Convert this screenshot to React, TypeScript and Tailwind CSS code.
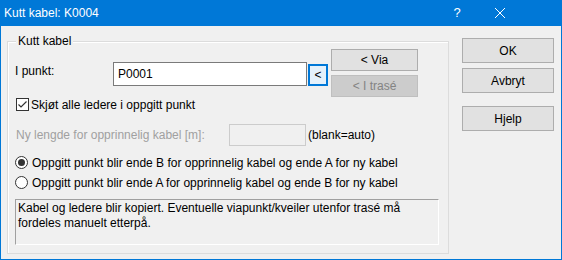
import React from 'react';

const FONT = "font-['Liberation_Sans',Arial,sans-serif]";

function WinButton({ label, disabled, className = '' }: { label: string; disabled?: boolean; className?: string }) {
  return (
    <div
      className={`flex items-center justify-center border text-[12px] leading-none ${
        disabled ? 'bg-[#cccccc] border-[#bfbfbf] text-[#838383]' : 'bg-[#e1e1e1] border-[#adadad] text-black'
      } ${className}`}
    >
      {label}
    </div>
  );
}

function Checkbox() {
  return (
    <div className="w-[13px] h-[13px] border border-[#333333] bg-white flex items-center justify-center">
      <svg width="11" height="11" viewBox="0 0 11 11">
        <path d="M1.5 5.5 L4 8 L9.5 2.5" fill="none" stroke="#333333" strokeWidth="1.2" />
      </svg>
    </div>
  );
}

function Radio({ checked }: { checked?: boolean }) {
  return (
    <div className="w-[13px] h-[13px] rounded-full border border-[#333333] bg-white flex items-center justify-center">
      {checked && <div className="w-[7px] h-[7px] rounded-full bg-[#333333]" />}
    </div>
  );
}

export default function App() {
  return (
    <div className={`w-[562px] h-[260px] bg-[#0078d7] flex flex-col ${FONT}`}>
      {/* Title bar */}
      <div className="h-[26px] flex items-center text-white">
        <span className="ml-[4px] text-[12px] flex-1">Kutt kabel: K0004</span>
        <span className="text-[13px] w-[40px] text-center">?</span>
        <div className="w-[46px] mr-[39px] flex items-center justify-center">
          <svg width="10" height="10" viewBox="0 0 10 10">
            <path d="M0 0 L10 10 M10 0 L0 10" stroke="white" strokeWidth="1" />
          </svg>
        </div>
      </div>

      {/* Body */}
      <div className="flex-1 mx-[1px] mb-[1px] bg-[#f0f0f0] flex text-[12px] text-black">
        {/* Group box */}
        <div className="ml-[6px] mt-[15px] w-[442px] h-[213px] border border-[#dcdcdc] shadow-[inset_1px_1px_0_#ffffff] relative px-[7px] pt-[7px]">
          <span className="absolute top-[-8px] left-[8px] px-[2px] bg-[#f0f0f0] leading-[14px]">Kutt kabel</span>

          {/* I punkt row */}
          <div className="flex items-start">
            <span className="mt-[15px] w-[98px] leading-[14px]">I punkt:</span>
            <div className="mt-[13px] w-[194px] h-[24px] border border-[#7a7a7a] bg-white flex items-center pl-[4px]">P0001</div>
            <div className="mt-[15px] ml-[1px] w-[20px] h-[22px] border-2 border-[#0078d7] bg-[#e5f1fb] flex items-center justify-center">&lt;</div>
            <div className="ml-[3px] flex flex-col gap-[4px]">
              <WinButton label="< Via" className="w-[87px] h-[22px]" />
              <WinButton label="< I trasé" disabled className="w-[87px] h-[22px]" />
            </div>
          </div>

          {/* Checkbox */}
          <div className="mt-[1px] ml-[1px] flex items-center gap-[2px] h-[13px]">
            <Checkbox />
            <span className="leading-[14px]">Skjøt alle ledere i oppgitt punkt</span>
          </div>

          {/* Ny lengde */}
          <div className="mt-[13px] flex items-center h-[22px]">
            <span className="ml-[1px] w-[213px] text-[#a0a0a0]">Ny lengde for opprinnelig kabel [m]:</span>
            <div className="w-[77px] h-[22px] border border-[#cccccc] bg-[#f0f0f0]" />
            <span className="ml-[2px]">(blank=auto)</span>
          </div>

          {/* Radios */}
          <div className="mt-[10px] flex flex-col gap-[7px]">
            <div className="flex items-center gap-[4px] h-[13px]">
              <Radio checked />
              <span>Oppgitt punkt blir ende B for opprinnelig kabel og ende A for ny kabel</span>
            </div>
            <div className="flex items-center gap-[4px] h-[13px]">
              <Radio />
              <span>Oppgitt punkt blir ende A for opprinnelig kabel og ende B for ny kabel</span>
            </div>
          </div>

          {/* Info */}
          <div className="mt-[10px] w-[424px] h-[46px] border border-t-[#a0a0a0] border-l-[#a0a0a0] border-b-white border-r-white px-[2px] pt-[1px] leading-[15px]">
            Kabel og ledere blir kopiert. Eventuelle viapunkt/kveiler utenfor trasé må
            <br />
            fordeles manuelt etterpå.
          </div>
        </div>

        {/* Buttons */}
        <div className="ml-[13px] mt-[12px] flex flex-col">
          <WinButton label="OK" className="w-[92px] h-[25px]" />
          <WinButton label="Avbryt" className="mt-[5px] w-[92px] h-[25px]" />
          <WinButton label="Hjelp" className="mt-[13px] w-[92px] h-[25px]" />
        </div>
      </div>
    </div>
  );
}
